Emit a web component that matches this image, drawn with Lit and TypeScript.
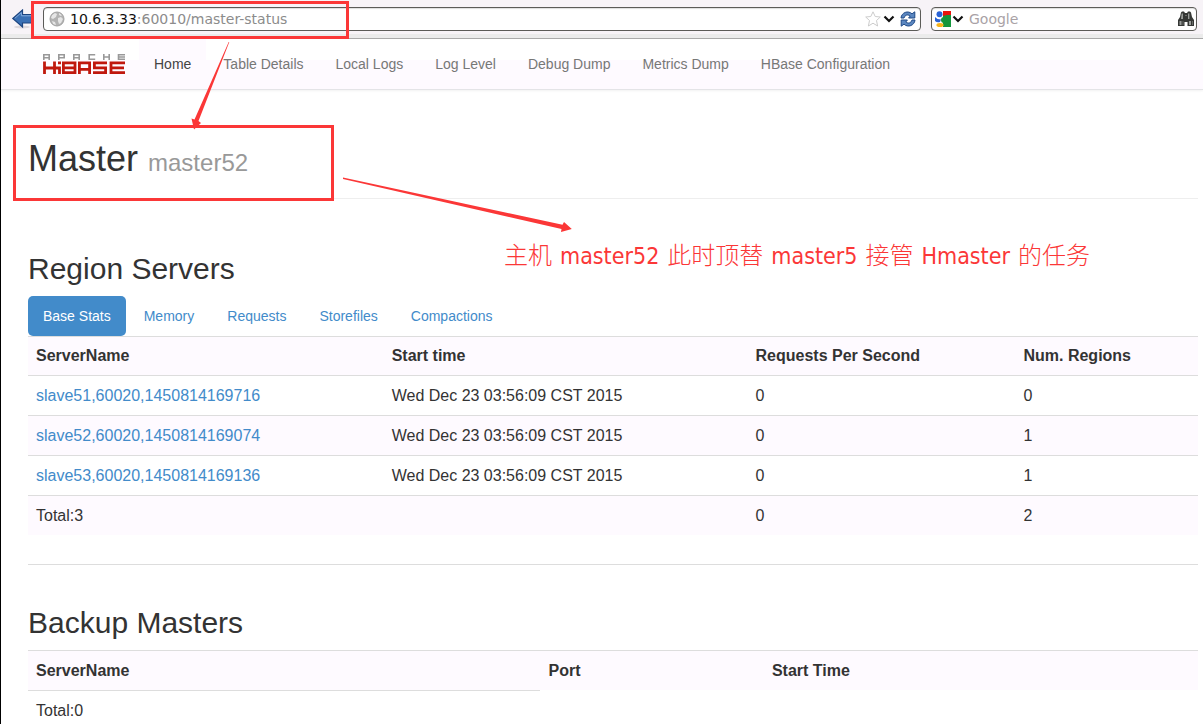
import { LitElement, html, css, svg } from "lit";
import { customElement } from "lit/decorators.js";

const servers = [
  { name: "slave51,60020,1450814169716", start: "Wed Dec 23 03:56:09 CST 2015", rps: 0, regions: 0 },
  { name: "slave52,60020,1450814169074", start: "Wed Dec 23 03:56:09 CST 2015", rps: 0, regions: 1 },
  { name: "slave53,60020,1450814169136", start: "Wed Dec 23 03:56:09 CST 2015", rps: 0, regions: 1 },
];

const chevron = svg`<path d="M1.5 2.5 L6 7 L10.5 2.5" fill="none" stroke="#111" stroke-width="2.2"/>`;

@customElement("browser-bar")
export class BrowserBar extends LitElement {
  static styles = css`
    :host {
      display: flex;
      align-items: center;
      gap: 10px;
      padding: 7px 6px 7px 10px;
      background: linear-gradient(#f7f3f7 0 34px, #ebebeb 34px);
      border-bottom: 1px solid #a5a5a5;
      font: 14px/22px "DejaVu Sans", sans-serif;
    }
    button {
      display: flex;
      border: 0;
      padding: 0;
      background: none;
    }
    svg { display: block; flex: none; }
    .left { display: flex; flex: 1; align-items: center; gap: 12px; min-width: 0; }
    .field {
      display: flex;
      align-items: center;
      box-sizing: border-box;
      height: 24px;
      border: 1px solid #5c5b58;
      border-radius: 4px;
      background: #fff;
      padding: 0 4px 0 5px;
      box-shadow: inset 0 1px 1px #ddd;
    }
    .address { flex: 1; gap: 5px; min-width: 0; }
    .mark { display: flex; align-items: center; gap: 2px; }
    .url { flex: 1; color: #8c8c8c; }
    .url b { font-weight: 400; color: #111; }
    .search { width: 266px; padding: 0 2px 0 3px; gap: 1px; }
    .search input {
      flex: 1;
      min-width: 0;
      border: 0;
      outline: 0;
      padding: 0 0 0 4px;
      background: none;
      font: inherit;
    }
    .search input::placeholder { color: #a9a2a6; opacity: 1; }
  `;

  render() {
    return html`
      <div class="left">
        <button aria-label="Back">
          <svg width="20" height="20" viewBox="0 0 20 20">
            <ellipse cx="11" cy="18" rx="8" ry="1.5" fill="#ddd8dc" />
            <path d="M1.8 9.5 L11.5 1 V5.5 H20.5 V14 H11.5 V18 Z" fill="#3a70b4" stroke="#1d4580" stroke-width="1.2" />
            <path d="M3.8 9.3 L10.4 3.5 V6.8 H20" fill="none" stroke="#82abdc" />
          </svg>
        </button>
        <div class="field address">
          <svg width="16" height="16" viewBox="0 0 16 16">
            <circle cx="8" cy="8" r="7" fill="#b3b3b3" />
            <path d="M3 4 L6 2 L8 3 L7 6 L4 8 L2 7 Z M9 7 L12 6 L14 8 L12 12 L10 13 L9 10 Z M10 2 L13 4 L12 5 L10 4 Z M3 10 L6 11 L7 14 L4 13 Z" fill="#e6e6e6" />
            <circle cx="8" cy="8" r="7" fill="none" stroke="#a2a2a2" />
          </svg>
          <span class="url"><b>10.6.3.33</b>:60010/master-status</span>
          <div class="mark">
            <button aria-label="Bookmark">
              <svg width="16" height="16" viewBox="0 0 16 16"><path d="M8 .8 L10.2 5.5 L15.3 6 L11.5 9.5 L12.6 15 L8 12.2 L3.4 15 L4.5 9.5 L.7 6 L5.8 5.5 Z" fill="#fff" stroke="#ccc" /></svg>
            </button>
            <button aria-label="History"><svg width="12" height="10" viewBox="0 0 12 10">${chevron}</svg></button>
          </div>
          <button aria-label="Reload">
            <svg width="16" height="16" viewBox="0 0 16 16">
              <g fill="#5b87c0" stroke="#204a87" stroke-width="1">
                <path d="M1 7 C1.5 1.5 8 -1 12 2.8 L14.8 .8 V7 H8.6 L10.2 5 C7.5 3 5 4 4 7 Z" />
                <path d="M15 9 C14.5 14.5 8 17 4 13.2 L1.2 15.2 V9 H7.4 L5.8 11 C8.5 13 11 12 12 9 Z" />
              </g>
            </svg>
          </button>
        </div>
      </div>
      <div class="field search">
        <button aria-label="Search engine">
          <svg width="16" height="16" viewBox="0 0 16 16">
            <rect x="8" width="8" height="6" fill="#e8140c" />
            <path d="M8 5 L12 4 H16 V16 H8 Z" fill="#14963c" />
            <circle cx="9" cy="9" r="3" fill="#14963c" />
            <circle cx="4.5" cy="3.2" r="3" fill="#2a63d6" />
            <path d="M0 6 L2.5 8 L6 8.5 L5 11 Q2 12 0 10 Z" fill="#2a63d6" />
            <ellipse cx="5" cy="14" rx="3.6" ry="2" fill="#f8b41c" />
          </svg>
        </button>
        <button aria-label="Choose engine"><svg width="12" height="10" viewBox="0 0 12 10">${chevron}</svg></button>
        <input aria-label="Search" placeholder="Google" />
        <button aria-label="Find">
          <svg width="16" height="16" viewBox="0 0 16 16">
            <path d="M3 1.5 L4 .5 H6 L7 2 H9 L10 .5 H12 L13 1.5 L14 6 L16 9 V15 H9.5 V11 H6.5 V15 H0 V9 L2 6 Z" fill="#353735" />
            <path d="M1.5 10 H3.5 V14 H1.5 Z M11 10 H13 V14 H11 Z M3.6 2.5 H5 V8 H3 Z M10 2.5 H11.4 V8 H10 Z" fill="#999c99" />
            <path d="M4.5 10 H5.5 V14 H4.5 Z M14 10 H15 V14 H14 Z M7 4 H9 V5 H7 Z" fill="#686b68" />
          </svg>
        </button>
      </div>
    `;
  }
}

@customElement("app-root")
export class AppRoot extends LitElement {
  static styles = css`
    :host {
      display: block;
      position: relative;
      box-sizing: border-box;
      height: 100vh;
      overflow: hidden;
      border-left: 1px solid #000;
      background: #fff;
      color: #333;
      font: 16px/23px "Liberation Sans", Arial, sans-serif;
    }
    a { color: #428bca; text-decoration: none; }
    .navbar {
      display: flex;
      gap: 2px;
      padding: 0 27px;
      font-size: 14px;
      line-height: 20px;
      background: linear-gradient(#fff 0 21px, #fefaff 21px);
      border-bottom: 1px solid #e4e4e7;
      box-shadow: 0 1px 2px #f2f2f2;
    }
    .brand { display: block; padding: 14px 12px 0 15px; }
    .brand svg { display: block; }
    .navbar .item { padding: 15px; color: #777; }
    .navbar .current { color: #444; background: #fefaff; }
    main { padding: 0 5px 0 27px; }
    h1, h2 { margin: 0; font-weight: 400; }
    h1 {
      padding: 49px 0 19px;
      border-bottom: 1px solid #eee;
      font-size: 36px;
      line-height: 40px;
    }
    h1 small { font-size: 24px; line-height: 24px; color: #999; }
    h2 { font-size: 30px; line-height: 33px; }
    section { padding-top: 53px; }
    .pills { display: flex; gap: 3px; padding-top: 11px; font-size: 14px; line-height: 20px; }
    .pills a { padding: 10px 15px; border-radius: 5px; }
    .pills .active { background: #428bca; color: #fff; }
    table { width: 100%; table-layout: fixed; border-spacing: 0; }
    th, td { padding: 8px; border-top: 1px solid #ddd; text-align: left; }
    tr.shade { background: #fefaff; }
    .servers th { line-height: 22px; }
    .servers .c1 { width: 30.4%; }
    .servers .c2 { width: 31.1%; }
    .servers .c3 { width: 22.9%; }
    .backup { padding-top: 41px; }
    .backup table { margin-top: 11px; }
    .backup .c1 { width: 43.8%; }
    .backup .c2 { width: 19.1%; }
    hr { margin: 29px 0 0; border: 0; border-top: 1px solid #ddd; }
    .frame { position: absolute; box-sizing: border-box; border: 3px solid #fb3737; pointer-events: none; }
    .frame-url { left: 30px; top: 1px; width: 318px; height: 38px; }
    .frame-master { left: 12px; top: 125px; width: 321px; height: 76px; }
    .arrows { position: absolute; left: -1px; top: 0; pointer-events: none; }
    .note {
      position: absolute;
      left: 503px;
      top: 236px;
      display: flex;
      align-items: baseline;
      gap: 8px;
      margin: 0;
      white-space: nowrap;
      color: #fb3737;
      font: 300 24px/36px "Noto Sans CJK SC", sans-serif;
    }
    .note .latin { font: 400 23px/36px "DejaVu Sans Condensed", "DejaVu Sans", sans-serif; }
  `;

  render() {
    const links = ["Home", "Table Details", "Local Logs", "Log Level", "Debug Dump", "Metrics Dump", "HBase Configuration"];
    const pills = ["Base Stats", "Memory", "Requests", "Storefiles", "Compactions"];
    return html`
      <browser-bar></browser-bar>
      <nav class="navbar">
        <a class="brand" href="#" aria-label="Apache HBase">
          <svg width="82" height="22" viewBox="0 0 82 22">
            <g fill="none" stroke="#999" stroke-width="1.6">
              <path d="M.8 7 V1.8 H6.2 V7 M.8 4.8 H6.2" />
              <path d="M15.8 7 V1.8 H21.2 V4.8 H15.8" />
              <path d="M30.8 7 V1.8 H36.2 V7 M30.8 4.8 H36.2" />
              <path d="M52.2 1.8 H46.2 V6.2 H52.2" />
              <path d="M60.8 1 V7 M66.2 1 V7 M60.8 4 H66.2" />
              <path d="M82 1.8 H75.5 V6.2 H82 M75.5 4 H82" />
            </g>
            <g fill="none" stroke="#c0180e" stroke-width="2.8">
              <path d="M1.5 8.5 V21 M11.5 8.5 V21 M1.5 15 H16.5 V21 M15 9.9 H18" />
              <path d="M20.4 21 V9.9 H32 V19.6 H20 M20 14.8 H32" />
              <path d="M36.4 21 V9.9 H46.6 V21 M36.4 16.3 H46.6" />
              <path d="M64 9.9 H51.4 V14.8 H62.6 V19.6 H50" />
              <path d="M82 9.9 H68 V19.6 H82 M68 14.8 H81" />
            </g>
          </svg>
        </a>
        ${links.map((l, i) => html`<a class="item ${i === 0 ? "current" : ""}" href="#">${l}</a>`)}
      </nav>
      <main>
        <h1>Master <small>master52</small></h1>
        <section>
          <h2>Region Servers</h2>
          <div class="pills">
            ${pills.map((p, i) => html`<a class=${i === 0 ? "active" : ""} href="#">${p}</a>`)}
          </div>
          <table class="servers">
            <colgroup><col class="c1" /><col class="c2" /><col class="c3" /><col /></colgroup>
            <tbody>
              <tr class="shade"><th>ServerName</th><th>Start time</th><th>Requests Per Second</th><th>Num. Regions</th></tr>
              ${servers.map(
                (s, i) => html`<tr class=${i % 2 ? "shade" : ""}>
                  <td><a href="#">${s.name}</a></td><td>${s.start}</td><td>${s.rps}</td><td>${s.regions}</td>
                </tr>`
              )}
              <tr class="shade"><td>Total:3</td><td></td><td>0</td><td>2</td></tr>
            </tbody>
          </table>
        </section>
        <hr />
        <section class="backup">
          <h2>Backup Masters</h2>
          <table>
            <colgroup><col class="c1" /><col class="c2" /><col /></colgroup>
            <tbody>
              <tr class="shade"><th>ServerName</th><th>Port</th><th>Start Time</th></tr>
              <tr><td>Total:0</td></tr>
            </tbody>
          </table>
        </section>
      </main>
      <div class="frame frame-url"></div>
      <div class="frame frame-master"></div>
      <svg class="arrows" width="600" height="240" viewBox="0 0 600 240" fill="#fb3737">
        <path d="M229.3 42 L198.5 121 L201 123 L194 129.5 L191.5 118.5 L194.5 119.5 L228.7 42 Z" />
        <path d="M343 177.6 L562.5 224.8 L564 222 L571.8 229 L561 232 L561.5 229 L343 179 Z" />
      </svg>
      <p class="note">
        <span>主机</span><span class="latin">master52</span><span>此时顶替</span><span class="latin">master5</span><span>接管</span><span class="latin">Hmaster</span><span>的任务</span>
      </p>
    `;
  }
}
